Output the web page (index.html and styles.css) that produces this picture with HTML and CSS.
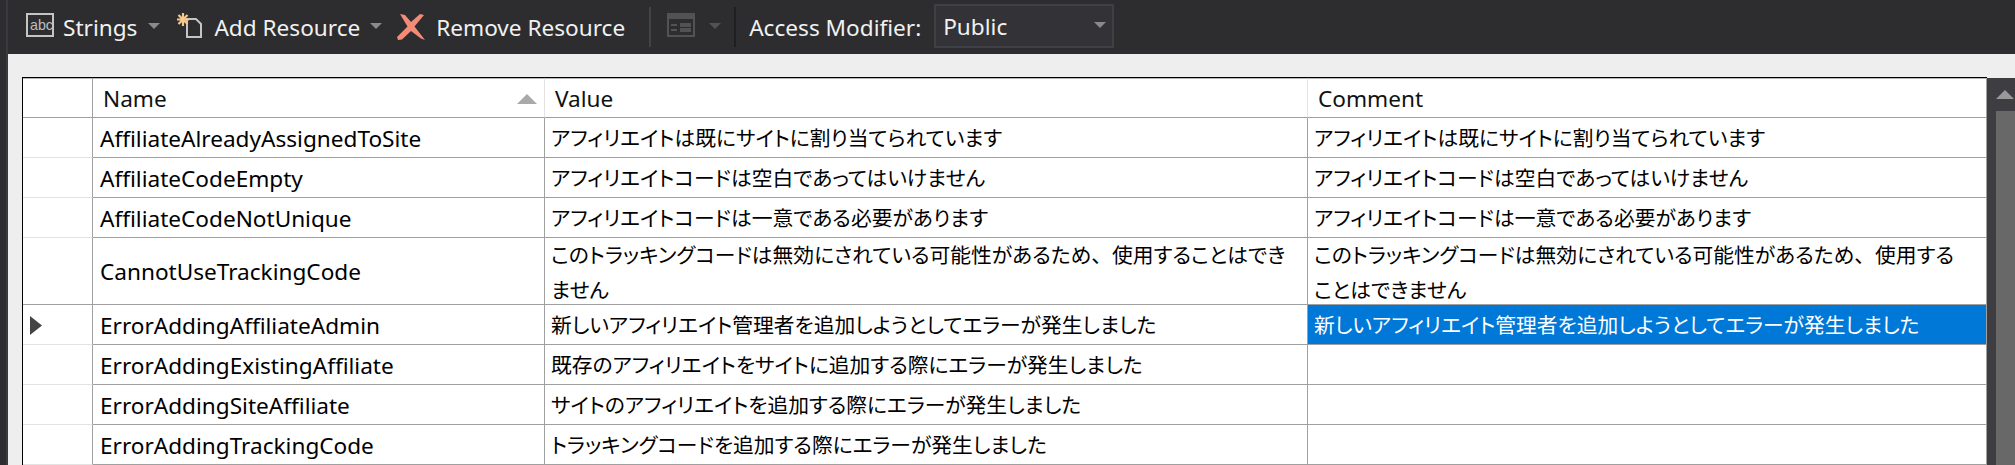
FILE: index.html
```html
<!DOCTYPE html>
<html lang="ja">
<head>
<meta charset="utf-8">
<title>Resources</title>
<link rel="stylesheet" href="styles.css">
</head>
<body>
<div class="app">
  <div class="edge"></div>
  <div class="main">
    <div class="toolbar">
      <svg class="icon icon-abc" width="28" height="24" viewBox="0 0 28 24"><text x="4" y="17" class="abc" textLength="23" lengthAdjust="spacingAndGlyphs">abc</text><rect x="1" y="1" width="26" height="22" fill="none" stroke="#c4c4c4" stroke-width="2"/></svg>
      <span class="label l-strings">Strings</span>
      <span class="caret c-strings"></span>
      <svg class="icon icon-add" width="27" height="26" viewBox="0 0 27 26"><path d="M11 7h9l5 5v13H11z" fill="none" stroke="#c4c4c4" stroke-width="2"/><path d="M7 1v13M1 7.500h12M2.500 3l9 9M11.500 3l-9 9" stroke="#f6c88a" stroke-width="2.200" fill="none"/></svg>
      <span class="label l-add">Add Resource</span>
      <span class="caret c-add"></span>
      <svg class="icon icon-remove" width="28" height="26" viewBox="0 0 28 26"><path d="M3 0L8 1L14 8L23 0L27 1L17.500 12.500L28 26L24 24.500L14 17L5 25.500L1 26L0 23L10.500 12.500Z" fill="#f38b76"/></svg>
      <span class="label l-remove">Remove Resource</span>
      <span class="sep s-1"></span>
      <svg class="icon icon-view" width="28" height="24" viewBox="0 0 28 24"><rect width="28" height="24" fill="#525252"/><rect x="2" y="6" width="24" height="16" fill="#2d2d30"/><path d="M4 11h6v2H4zM13 10h11v4H13zM4 16h6v2H4zM13 15h11v4H13z" fill="#525252"/></svg>
      <span class="caret caret-dim c-view"></span>
      <span class="sep s-2"></span>
      <span class="label l-access">Access Modifier:</span>
      <div class="combo">
        <span class="label">Public</span>
        <span class="caret"></span>
      </div>
    </div>
    <div class="panel">
      <div class="frame">
        <table class="grid">
          <colgroup>
            <col class="col-head"><col class="col-name"><col class="col-value"><col class="col-comment">
          </colgroup>
          <thead>
            <tr>
              <th class="corner"></th>
              <th class="th-name"><div class="sort-cell"><span>Name</span><span class="sort"></span></div></th>
              <th class="th-value">Value</th>
              <th class="th-comment">Comment</th>
            </tr>
          </thead>
          <tbody>
            <tr>
              <td class="rh"></td><td class="name">AffiliateAlreadyAssignedToSite</td>
              <td class="value">アフィリエイトは既にサイトに割り当てられています</td>
              <td class="comment">アフィリエイトは既にサイトに割り当てられています</td>
            </tr>
            <tr>
              <td class="rh"></td><td class="name">AffiliateCodeEmpty</td>
              <td class="value">アフィリエイトコードは空白であってはいけません</td>
              <td class="comment">アフィリエイトコードは空白であってはいけません</td>
            </tr>
            <tr>
              <td class="rh"></td><td class="name">AffiliateCodeNotUnique</td>
              <td class="value">アフィリエイトコードは一意である必要があります</td>
              <td class="comment">アフィリエイトコードは一意である必要があります</td>
            </tr>
            <tr class="tall">
              <td class="rh rh-dark"></td><td class="name">CannotUseTrackingCode</td>
              <td class="value"><div class="wrap">このトラッキングコードは無効にされている可能性があるため<span class="full">、</span>使用することはでき<br>ません</div></td>
              <td class="comment"><div class="wrap">このトラッキングコードは無効にされている可能性があるため<span class="full">、</span>使用する<br>ことはできません</div></td>
            </tr>
            <tr>
              <td class="rh"><svg class="marker" width="12" height="19" viewBox="0 0 12 19"><path d="M0 0L12 9.500L0 19Z" fill="#444"/></svg></td><td class="name">ErrorAddingAffiliateAdmin</td>
              <td class="value">新しいアフィリエイト管理者を追加しようとしてエラーが発生しました</td>
              <td class="comment selected">新しいアフィリエイト管理者を追加しようとしてエラーが発生しました</td>
            </tr>
            <tr>
              <td class="rh"></td><td class="name">ErrorAddingExistingAffiliate</td>
              <td class="value">既存のアフィリエイトをサイトに追加する際にエラーが発生しました</td>
              <td class="comment"></td>
            </tr>
            <tr>
              <td class="rh"></td><td class="name">ErrorAddingSiteAffiliate</td>
              <td class="value">サイトのアフィリエイトを追加する際にエラーが発生しました</td>
              <td class="comment"></td>
            </tr>
            <tr>
              <td class="rh"></td><td class="name">ErrorAddingTrackingCode</td>
              <td class="value">トラッキングコードを追加する際にエラーが発生しました</td>
              <td class="comment"></td>
            </tr>
          </tbody>
        </table>
      </div>
      <div class="scrollbar">
        <span class="scroll-up"></span>
        <div class="thumb"></div>
      </div>
    </div>
  </div>
</div>
</body>
</html>
```
FILE: styles.css
```css
* { box-sizing: border-box; }
html, body { margin: 0; height: 100%; overflow: hidden; }
body {
  font-family: "Noto Sans", "Noto Sans CJK JP", sans-serif;
  font-size: 22.6px;
  font-feature-settings: "palt";
  background: #eeeeee;
}
.app { display: flex; height: 465px; }
.edge {
  width: 8px;
  background: #2d2d30;
  border-right: 2px solid #3a3a3e;
  flex: none;
}
.main { flex: 1; display: flex; flex-direction: column; min-width: 0; }

.toolbar {
  height: 54px;
  flex: none;
  background: #2d2d30;
  display: flex;
  align-items: center;
  color: #f1f1f1;
}
.label { line-height: 28px; white-space: nowrap; padding-top: 2px; }
.icon { flex: none; display: block; }
.abc { font-family: "Liberation Sans", sans-serif; font-size: 15px; fill: #bdbdbd; }
.icon-abc { margin-left: 18px; margin-top: -4px; }
.l-strings { margin-left: 9px; }
.c-strings { margin-left: 11px; }
.icon-add { margin-left: 16px; margin-top: -4px; }
.l-add { margin-left: 11px; }
.c-add { margin-left: 10px; }
.icon-remove { margin-left: 15px; }
.l-remove { margin-left: 11px; }
.caret {
  flex: none;
  width: 0; height: 0;
  border-left: 6px solid transparent;
  border-right: 6px solid transparent;
  border-top: 6px solid #8a8a8a;
  margin-top: -3px;
}
.caret-dim { border-top-color: #525252; }
.sep { flex: none; width: 2px; height: 40px; background: #434346; margin-top: -1px; }
.s-1 { margin-left: 24px; }
.icon-view { margin-left: 16px; margin-top: -4px; }
.c-view { margin-left: 14px; }
.s-2 { margin-left: 13px; background: #1f1f21; }
.l-access { margin-left: 13px; }
.combo {
  margin-left: 13px;
  width: 180px;
  height: 44px;
  background: #333337;
  border: 2px solid #3f3f46;
  display: flex;
  align-items: center;
  justify-content: space-between;
  padding: 0 6px 0 7px;
  flex: none;
  margin-top: -2px;
}

.panel { flex: 1; display: flex; padding: 23px 0 0 14px; min-height: 0; }
.frame {
  width: 1965px;
  flex: none;
  border-top: 1px solid #000;
  border-left: 1px solid #000;
  background: #fff;
  overflow: hidden;
}
.grid {
  width: 1964px;
  table-layout: fixed;
  border-collapse: separate;
  border-spacing: 0;
  color: #000;
}
.col-head { width: 70px; }
.col-name { width: 452px; }
.col-value { width: 763px; }
.col-comment { width: 679px; }

th, td {
  padding: 1px 0 0 7px;
  height: 40px;
  font-weight: 400;
  text-align: left;
  white-space: nowrap;
  border-right: 1px solid #a0a0a0;
  border-bottom: 1px solid #a0a0a0;
  line-height: 33px;
  vertical-align: middle;
  overflow: hidden;
}
td { font-size: 20.75px; }
td.name { font-size: 22.6px; }
th {
  border-top: 1px solid #b8b8b8;
  border-right-color: #e3e3e3;
  color: #111;
}
.corner { border-right-color: #a0a0a0; }
.th-name { padding-left: 10px; }
.th-value { padding-left: 10px; }
.th-comment { padding-left: 10px; border-right-color: #a0a0a0; }
.sort-cell { display: flex; justify-content: space-between; align-items: center; padding-right: 7px; }
.sort {
  width: 0; height: 0;
  border-left: 10px solid transparent;
  border-right: 10px solid transparent;
  border-bottom: 10px solid #a9a9a9;
}
.rh { padding-left: 7px; border-bottom-color: #e3e3e3; }
.rh-dark { border-bottom-color: #a0a0a0; }
.marker { display: block; }
.tall td { height: 67px; padding-top: 0; }
.wrap { height: 66px; line-height: 35px; overflow: hidden; }
td.value { padding-left: 6px; }
td.comment { padding-left: 6px; }
.full { font-feature-settings: normal; }
.selected { background: #0078d7; color: #fff; }

.scrollbar {
  flex: 1;
  background: #3e3e42;
  margin-top: 1px;
  padding: 12px 0 0 9px;
  display: flex;
  flex-direction: column;
  align-items: flex-start;
}
.scroll-up {
  flex: none;
  width: 0; height: 0;
  border-left: 9px solid transparent;
  border-right: 9px solid transparent;
  border-bottom: 9px solid #999999;
}
.thumb { margin-top: 12px; width: 100%; flex: 1; background: #686868; }
```
